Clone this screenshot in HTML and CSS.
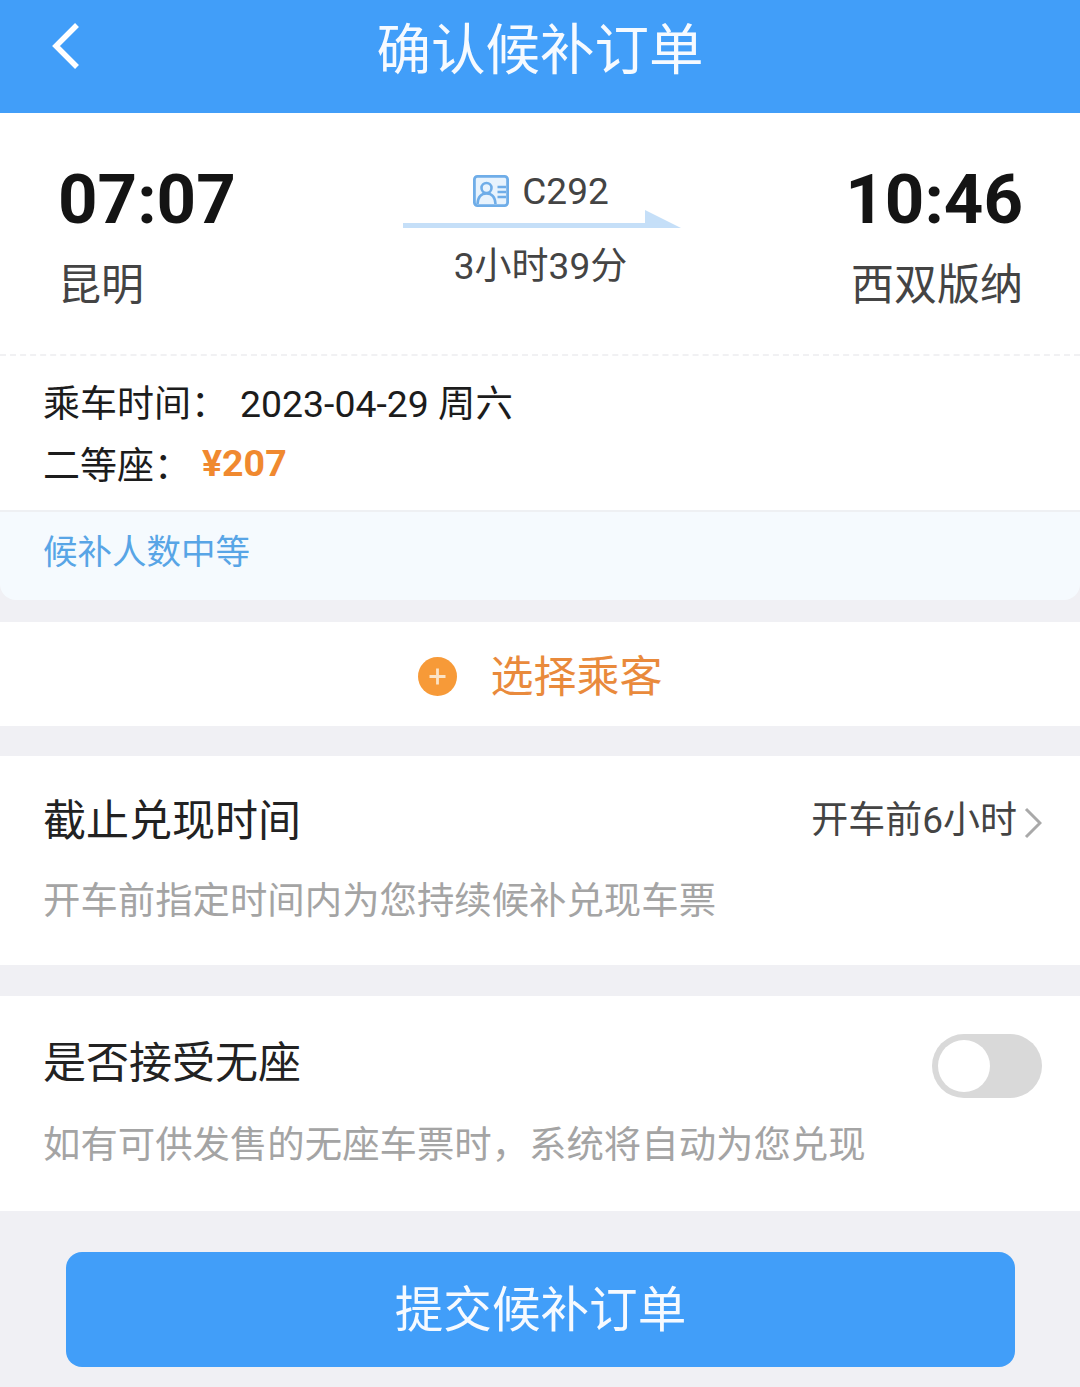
FILE: index.html
```html
<!DOCTYPE html>
<html lang="zh-CN">
<head>
<meta charset="utf-8">
<title>确认候补订单</title>
<link rel="stylesheet" href="styles.css">
</head>
<body>
<div class="page">
  <header class="topbar">
    <svg class="back" width="32" height="48" viewBox="0 0 32 48"><path d="M28 3 L7 24 L28 45" fill="none" stroke="#fff" stroke-width="5.5"/></svg>
    <h1 class="title">确认候补订单</h1>
  </header>

  <section class="trip">
    <div class="stop">
      <div class="time">07:07</div>
      <div class="station">昆明</div>
    </div>
    <div class="train">
      <div class="code">
        <svg width="36" height="32" viewBox="0 0 36 32"><rect x="1.4" y="1.4" width="33.2" height="29.2" rx="3" fill="#e8f3fd" stroke="#6fade8" stroke-width="2.800"/><circle cx="13.500" cy="13" r="5" fill="none" stroke="#6fade8" stroke-width="2.600"/><path d="M4.500 29 C5 21 9 18.500 13.500 18.500 C18 18.500 22 21 22.500 29 M24.500 12H33 M24.500 17H33 M24.500 22H33" fill="none" stroke="#6fade8" stroke-width="2.600"/></svg>
        <span>C292</span>
      </div>
      <svg class="arrow" width="280" height="20" viewBox="0 0 280 20"><path d="M2 13 H244 V0 L280 18 H2 Z" fill="#c5dff8"/></svg>
      <div class="duration">3小时39分</div>
    </div>
    <div class="stop stop-end">
      <div class="time">10:46</div>
      <div class="station">西双版纳</div>
    </div>
  </section>

  <section class="info">
    <div class="info-row"><span class="info-label">乘车时间：</span><span>2023-04-29 周六</span></div>
    <div class="info-row info-row-seat"><span class="seat-label">二等座：</span><span class="price">¥207</span></div>
  </section>
  <section class="tip">候补人数中等</section>

  <section class="select">
    <svg class="plus" width="39" height="39" viewBox="0 0 39 39"><circle cx="19.500" cy="19.500" r="19.500" fill="#f79a38"/><path d="M19.500 11.500V27.500M11.500 19.500H27.500" stroke="#fbe3c6" stroke-width="2.800"/></svg>
    <span class="select-text">选择乘客</span>
  </section>

  <section class="panel panel-deadline">
    <div class="panel-head">
      <h2 class="panel-title">截止兑现时间</h2>
      <div class="panel-value">
        <span>开车前6小时</span>
        <svg class="chev" width="18" height="32" viewBox="0 0 18 32"><path d="M2 2 L16 16 L2 30" fill="none" stroke="#a9a9a9" stroke-width="3"/></svg>
      </div>
    </div>
    <p class="panel-desc">开车前指定时间内为您持续候补兑现车票</p>
  </section>

  <section class="panel panel-standing">
    <div class="panel-head">
      <h2 class="panel-title">是否接受无座</h2>
      <div class="switch"><div class="knob"></div></div>
    </div>
    <p class="panel-desc">如有可供发售的无座车票时，系统将自动为您兑现</p>
  </section>

  <footer class="foot">
    <button class="submit">提交候补订单</button>
  </footer>
</div>
</body>
</html>
```

FILE: styles.css
```css
* { box-sizing: border-box; }
html, body { margin: 0; padding: 0; }
body {
  background: #f0f0f4;
  font-family: "Noto Sans CJK SC", Roboto, sans-serif;
  color: #222;
}
.page { width: 1080px; height: 1387px; overflow: hidden; display: flex; flex-direction: column; }

.topbar {
  height: 113px;
  background: #419ef9;
  display: flex;
  align-items: center;
  justify-content: center;
  position: relative;
  padding-bottom: 22px;
}
.back { position: absolute; left: 49px; top: 22px; }
.title { margin: 0; font-size: 54.500px; line-height: 72px; font-weight: 400; color: #f6faff; }

.trip {
  height: 243px;
  background: #fff;
  border-bottom: 2px dashed #f1f1f3;
  display: flex;
  justify-content: space-between;
  padding: 51px 57px 0 58px;
}
.stop { width: 220px; display: flex; flex-direction: column; }
.stop-end { align-items: flex-end; }
.time {
  font-family: Roboto, sans-serif;
  font-weight: 700;
  font-size: 69px;
  line-height: 72px;
  color: #141414;
}
.station { font-size: 43px; line-height: 60px; margin-top: 15px; color: #444; }

.train { width: 280px; display: flex; flex-direction: column; align-items: center; margin-top: 5px; }
.code { display: flex; align-items: center; gap: 13px; height: 44px; padding-left: 1px; font-family: Roboto, sans-serif; font-size: 37px; color: #444; }
.arrow { margin-top: -3px; display: block; }
.duration { font-size: 37px; line-height: 50px; margin-top: 12px; color: #444; font-family: Roboto, "Noto Sans CJK SC", sans-serif; }

.info {
  height: 154px;
  background: #fff;
  padding: 15px 43px 0;
  font-size: 37.400px;
  color: #1c1c1c;
  font-family: Roboto, "Noto Sans CJK SC", sans-serif;
}
.info-row { display: flex; height: 60px; align-items: center; }
.info-row-seat { margin-top: 2px; }
.info-label { width: 197px; font-size: 37px; }
.seat-label { width: 159px; font-size: 37px; }
.price { font-weight: 700; color: #f0892f; font-size: 37.500px; }

.tip {
  height: 90px;
  background: #f5fafe;
  border-top: 2px solid #eef0f3;
  border-radius: 0 0 16px 16px;
  padding: 11px 43px 0;
  font-size: 34.500px;
  line-height: 52px;
  color: #58a5e6;
}

.select {
  height: 104px;
  margin-top: 22px;
  background: #fff;
  display: flex;
  align-items: center;
  justify-content: center;
  gap: 34px;
  font-size: 43px;
  color: #e98a3c;
}
.plus { margin-top: 4px; }
.select-text { margin-bottom: 2px; }

.panel { background: #fff; padding: 0 38px 0 43px; }
.panel-deadline { height: 209px; margin-top: 30px; padding-top: 29px; }
.panel-standing { height: 215px; margin-top: 31px; padding-top: 31px; }
.panel-head { display: flex; justify-content: space-between; align-items: flex-start; height: 64px; }
.panel-title { margin: 0; font-size: 43px; line-height: 64px; font-weight: 400; color: #222; }
.panel-value { display: flex; align-items: flex-start; gap: 7px; font-size: 37px; line-height: 72px; color: #444; font-family: Roboto, "Noto Sans CJK SC", sans-serif; }
.chev { margin-top: 22px; }
.panel-desc { margin: 0; font-size: 37.400px; line-height: 54px; color: #a4a4a4; white-space: nowrap; }
.panel-deadline .panel-desc { margin-top: 22px; }
.panel-standing .panel-desc { margin-top: 24px; }

.switch { width: 110px; height: 64px; margin-top: 7px; border-radius: 32px; background: #d9d9d9; padding: 6px; }
.knob { width: 52px; height: 52px; border-radius: 50%; background: #fff; }

.foot { flex: 1; padding: 41px 65px 0 66px; }
.submit {
  display: block;
  width: 100%;
  height: 115px;
  border: 0;
  border-radius: 16px;
  background: #419ef9;
  color: #f6faff;
  font-family: "Noto Sans CJK SC", sans-serif;
  font-weight: 400;
  font-size: 48.600px;
  padding: 0 0 8px;
}
```
